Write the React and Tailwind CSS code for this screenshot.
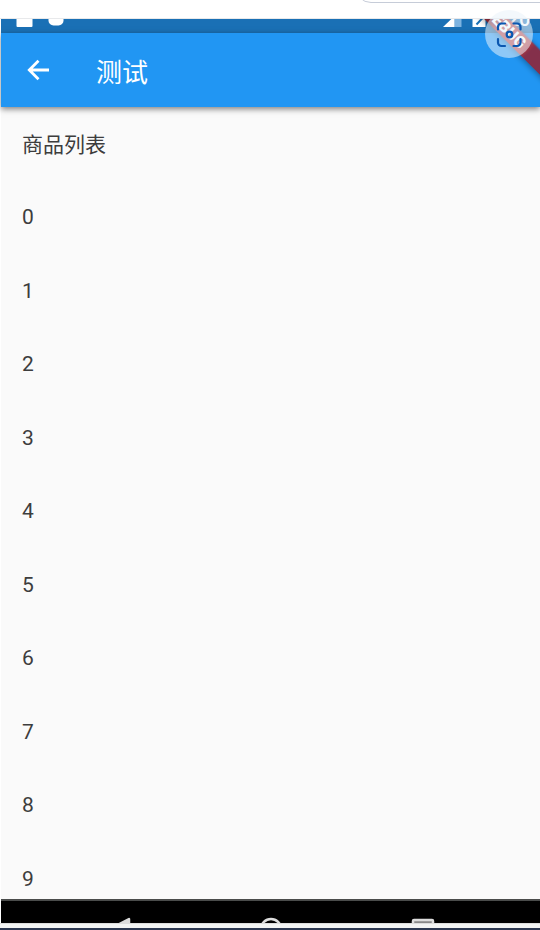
const items = ['商品列表', '0', '1', '2', '3', '4', '5', '6', '7', '8', '9']

function StatusBar() {
  return (
    <div className="relative h-3.5 shrink-0 overflow-hidden bg-[#1a70b5]">
      <svg className="block h-3.5 w-full" viewBox="1 19 539 14" fill="#fff">
        <rect x="16.5" y="12" width="16" height="15" rx="1" />
        <rect x="48.5" y="10" width="15" height="15.5" rx="5" />
        <path d="M454.500 19h7v8h-7z" fill="#7db3e0" />
        <path d="M443 27l11.500-11v11z" />
        <path d="M472.500 12h13v15h-13z" />
        <path d="M476.500 24.500l6.500-7" stroke="#1a70b5" strokeWidth="2" />
        <text x="491" y="25.500" fontSize="20" fontWeight="500" fontFamily="Roboto, sans-serif">7:20</text>
      </svg>
    </div>
  )
}

function DebugBanner() {
  return (
    <svg className="absolute top-0 right-0 h-[70px] w-[70px]" viewBox="470 19 70 70">
      <defs>
        <linearGradient id="ribbon">
          <stop offset="0.4" stopColor="#7a2634" />
          <stop offset="0.46" stopColor="#b43a40" />
          <stop offset="0.66" stopColor="#b43a40" />
          <stop offset="0.7" stopColor="#84304b" />
        </linearGradient>
      </defs>
      <g transform="translate(507 29) rotate(45)">
        <rect x="-80" y="-8.500" width="160" height="17.500" fill="url(#ribbon)" className="drop-shadow-[0_1px_3px_rgba(0,0,0,0.4)]" />
        <text x="-2" y="5.500" textAnchor="middle" fontSize="16" fontWeight="900" fill="#fff" fontFamily="Roboto, sans-serif">DEBUG</text>
      </g>
    </svg>
  )
}

function ScanButton() {
  return (
    <button className="absolute top-[10px] right-[7px] h-12 w-12 rounded-full bg-[#eaf3fa]/55" aria-label="Scan">
      <svg className="block h-12 w-12" viewBox="0 0 48 48" fill="none" stroke="#0b57b0" strokeWidth="2.200" strokeLinecap="round">
        <path d="M13 19.500v-2.500a3.500 3.500 0 0 1 3.500-3.500h3.500M28.500 13.500h3.500a3.500 3.500 0 0 1 3.500 3.500v2.500M13 29v3.500a3.500 3.500 0 0 0 3.500 3.500h3.500M35.500 29v3.500a3.500 3.500 0 0 1-3.500 3.500h-3.500" />
        <circle cx="24.500" cy="24.500" r="2.800" />
      </svg>
    </button>
  )
}

function NavBar() {
  return (
    <div className="h-6 shrink-0 overflow-hidden border-t-2 border-[#4a4c4b] bg-black">
      <svg className="block h-[22px] w-full" viewBox="1 901 539 22" fill="none" stroke="#ddd" strokeWidth="2.500">
        <path d="M129 919v20l-19-10z" fill="#ddd" strokeLinejoin="round" />
        <circle cx="271" cy="929" r="10" />
        <rect x="413" y="920" width="20" height="20" rx="1" fill="#888" />
      </svg>
    </div>
  )
}

export default function App() {
  return (
    <div className="relative flex h-[930px] w-[540px] flex-col overflow-hidden bg-white font-['Roboto','Noto_Sans_CJK_SC',sans-serif]">
      <div className="h-[19px] shrink-0 overflow-hidden border-b border-[#e8e9eb] pl-[355px]">
        <div className="-mt-8 h-[35px] w-[220px] rounded-2xl border border-[#c6ccd8]" />
      </div>

      <div className="relative ml-px flex h-[904px] shrink-0 flex-col bg-[#fafafa]">
        <StatusBar />
        <header className="z-0 flex h-[74px] shrink-0 items-center bg-[#2196f3] pl-[25px] text-white shadow-[0_2px_6px_rgba(0,0,0,0.5)]">
          <svg className="h-6 w-6" viewBox="0 0 24 24" fill="none" stroke="currentColor" strokeWidth="2.800">
            <path d="M23 12H3.500M12.500 2.800L3.300 12l9.200 9.200" />
          </svg>
          <h1 className="ml-[46px] pt-[5px] text-[26px] leading-none">测试</h1>
        </header>
        <ul className="min-h-0 flex-1 overflow-hidden">
          {items.map(item => (
            <li key={item} className="flex h-[73.5px] items-center pt-px pl-[21px] text-[21px] text-[#3d3d3d] first:pt-[3px]">
              {item}
            </li>
          ))}
        </ul>
        <NavBar />
        <DebugBanner />
      </div>

      <div className="h-[5px] shrink-0 border-t border-[#ddd] bg-[#f3f4f3]" />
      <div className="h-0.5 shrink-0 bg-[#2b3750]" />

      <ScanButton />
    </div>
  )
}
